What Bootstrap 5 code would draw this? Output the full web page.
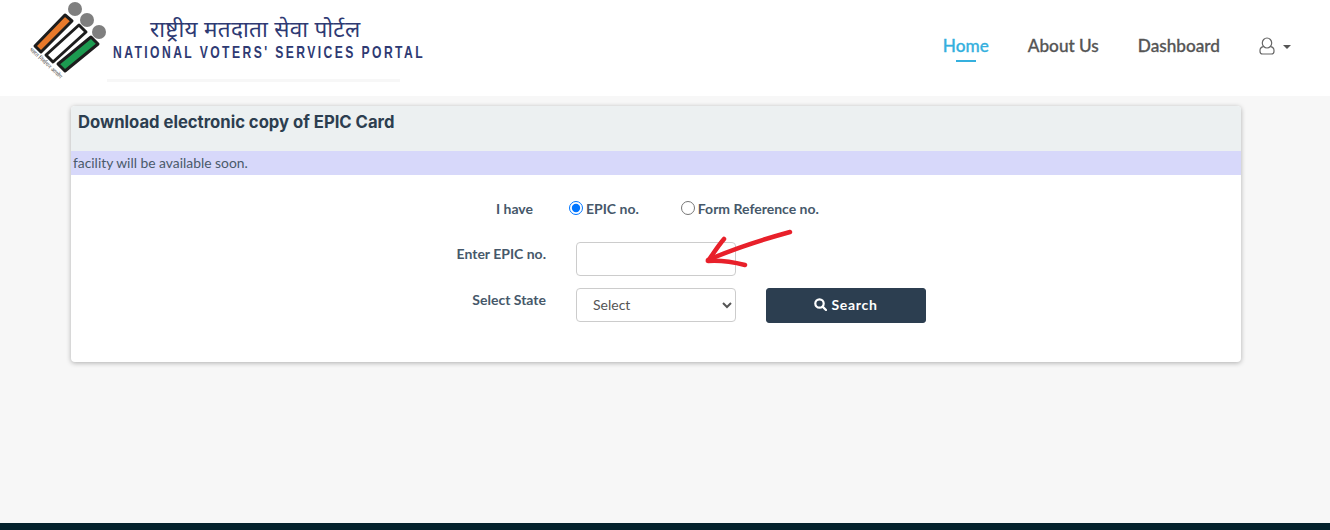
<!DOCTYPE html>
<html lang="en">
<head>
  <meta charset="UTF-8" />
  <meta name="viewport" content="width=device-width, initial-scale=1.0"/>
  <link href="https://cdn.jsdelivr.net/npm/bootstrap@5.3.5/dist/css/bootstrap.min.css" rel="stylesheet" />
  <script src="https://cdn.jsdelivr.net/npm/bootstrap@5.3.5/dist/js/bootstrap.bundle.min.js" defer></script>
  <title>National Voters' Services Portal</title>
  <style>
    body {
      background: #f7f7f7;
      font-family: Lato, "Open Sans", sans-serif;
      color: #34495e;
    }

    .top-head {
      height: 96px;
      background: #fff;
      padding: 0 39px 0 28px;
    }

    .logo-mark { width: 82px; height: 84px; }

    .logo-words { margin-left: 3px; padding-top: 15px; }

    .hindi-name {
      font-family: "Noto Sans", "DejaVu Sans", sans-serif;
      font-size: 22.5px;
      line-height: 28px;
      letter-spacing: .3px;
      color: #2e3a73;
      padding-left: 37px;
    }

    .english-name {
      font-family: "Liberation Sans", sans-serif;
      font-weight: 700;
      font-size: 16.5px;
      line-height: 18px;
      letter-spacing: 3.3px;
      color: #2e3a73;
      white-space: nowrap;
      transform: scaleX(.735);
      transform-origin: left center;
    }

    .logo-fade {
      width: 293px;
      height: 3px;
      margin: 18px 0 0 -6px;
      background: #f7f7f7;
    }

    .top-nav { gap: 39px; margin-bottom: 4px; }

    .top-nav .nav-link {
      padding: 0;
      font-size: 17.2px;
      font-weight: 500;
      -webkit-text-stroke: .3px currentColor;
      color: #555;
      position: relative;
    }

    .top-nav .nav-link.active { color: #35b0de; }

    .top-nav .nav-link.active::after {
      content: "";
      position: absolute;
      left: 13px;
      right: 13px;
      bottom: -3px;
      height: 2px;
      background: #35b0de;
    }

    .user-menu { display: flex; align-items: center; gap: 8px; }

    .user-menu i {
      margin-top: 2px;
      border-top: 4px solid #555;
      border-left: 4px solid transparent;
      border-right: 4px solid transparent;
    }

    .main-wrap { padding: 10px 89px 0 71px; }

    .epic-box {
      height: 256px;
      background: #fff;
      border-radius: 4px;
      box-shadow: 0 1px 5px rgba(0, 0, 0, .3);
      overflow: hidden;
    }

    .epic-title {
      height: 45px;
      background: #ecf0f1;
      padding: 6px 7px 0;
      font-family: Inter, sans-serif;
      font-weight: 700;
      font-size: 16.65px;
      line-height: 20px;
      color: #2c3e50;
    }

    .epic-note {
      height: 24px;
      background: #d7d8fa;
      padding-left: 2px;
      font-size: 13.85px;
      line-height: 24px;
      color: #4a5a6a;
    }

    .epic-form {
      display: grid;
      grid-template-columns: 475px 160px 160px;
      column-gap: 30px;
      padding-top: 24px;
      position: relative;
      font-size: 14px;
    }

    .field-name {
      text-align: right;
      font-weight: 700;
      line-height: 20px;
      color: #46586a;
      padding-top: 2px;
    }

    .choice-row {
      grid-column: 2 / 4;
      margin-left: -7px;
      height: 43px;
      display: flex;
      font-weight: 700;
      line-height: 20px;
      color: #46586a;
    }

    .choice-row label { display: flex; align-items: flex-start; gap: 3px; }

    .choice-row label + label { margin-left: 42px; }

    .choice-row input { width: 14px; height: 14px; margin: 2px 0 0; }

    .have-label { padding: 0 13px 0 0; height: 43px; }

    .epic-form .form-control,
    .epic-form .form-select {
      height: 34px;
      font-size: 14px;
      color: #555;
      border-color: #ccc;
      border-radius: 4px;
      padding-left: 16px;
    }

    .epic-form .form-select {
      appearance: auto;
      background-image: none;
      padding: 0 0 2px 12px;
    }

    .second-row { margin-top: 12px; }

    .epic-btn {
      height: 35px;
      background: #2c3e50;
      border-color: #2c3e50;
      color: #fff;
      font-size: 14px;
      font-weight: 700;
      letter-spacing: .7px;
      border-radius: 3px;
      padding: 0 0 2px;
    }

    .red-arrow {
      position: absolute;
      left: 630px;
      top: 50px;
      width: 100px;
      height: 50px;
      pointer-events: none;
    }

    .page-foot { height: 7px; background: #04222c; }
  </style>
</head>
<body class="d-flex flex-column min-vh-100">

  <header class="top-head d-flex align-items-center justify-content-between">
    <div class="d-flex align-items-start align-self-start">
      <svg class="logo-mark" viewBox="28 0 82 84" aria-hidden="true">
        <circle cx="75" cy="9" r="7" fill="#7f7f7f"/>
        <circle cx="87" cy="20" r="7" fill="#7f7f7f"/>
        <circle cx="99" cy="32" r="7" fill="#7f7f7f"/>
        <polygon points="65,15 72,21 41,52 35,46" fill="#e8792a" stroke="#1d1d1d" stroke-width="3" stroke-linejoin="round"/>
        <polygon points="79,25 86,32 53,62 46,55" fill="#fff" stroke="#1d1d1d" stroke-width="3" stroke-linejoin="round"/>
        <polygon points="91,37 98,44 65,71 58,64" fill="#1c9a50" stroke="#1d1d1d" stroke-width="3" stroke-linejoin="round"/>
        <text x="29" y="50" transform="rotate(43 29 50)" font-size="5.500" fill="#555" font-family="Noto Sans, DejaVu Sans, sans-serif">भारत निर्वाचन आयोग</text>
      </svg>
      <div class="logo-words">
        <div class="hindi-name">राष्ट्रीय मतदाता सेवा पोर्टल</div>
        <div class="english-name">NATIONAL VOTERS' SERVICES PORTAL</div>
        <div class="logo-fade"></div>
      </div>
    </div>
    <nav class="nav top-nav align-items-center">
      <a class="nav-link active" href="#">Home</a>
      <a class="nav-link" href="#">About Us</a>
      <a class="nav-link" href="#">Dashboard</a>
      <a class="nav-link user-menu" href="#" aria-label="Account">
        <svg width="16" height="18" viewBox="0 0 16 18" fill="none" stroke="#666" stroke-width="1.200" aria-hidden="true">
          <ellipse cx="8" cy="6" rx="4.700" ry="5"/>
          <path d="M4.300 9.700C2.200 10.200 1 11.600 1 13.500v.7C1 16 2 17 3.600 17h8.800c1.600 0 2.600-1 2.600-2.800v-.7c0-1.900-1.200-3.300-3.300-3.800"/>
        </svg>
        <i></i>
      </a>
    </nav>
  </header>

  <main class="main-wrap">
    <section class="epic-box">
      <div class="epic-title">Download electronic copy of EPIC Card</div>
      <div class="epic-note">facility will be available soon.</div>
      <form class="epic-form">
        <div class="field-name have-label">I have</div>
        <div class="choice-row">
          <label><input type="radio" name="idType" checked>EPIC no.</label>
          <label><input type="radio" name="idType">Form Reference no.</label>
        </div>

        <label class="field-name" for="epicNo">Enter EPIC no.</label>
        <input class="form-control" id="epicNo" type="text">
        <div></div>

        <label class="field-name second-row" for="stateSel">Select State</label>
        <select class="form-select second-row" id="stateSel">
          <option>Select</option>
        </select>
        <button type="button" class="btn epic-btn second-row d-flex align-items-center justify-content-center gap-1">
          <svg width="13" height="13" viewBox="0 0 13 13" fill="none" stroke="#fff" stroke-width="2.200" aria-hidden="true">
            <circle cx="5.500" cy="5.500" r="4.200"/>
            <path d="M8.600 8.600L12 12" stroke-linecap="round"/>
          </svg>
          Search
        </button>

        <svg class="red-arrow" viewBox="0 0 100 50" fill="none" stroke="#e8202a" stroke-width="4.500" stroke-linecap="round" stroke-linejoin="round" aria-hidden="true">
          <path d="M89 7C60 15 30 25 7 35"/>
          <path d="M23 14C17 21 12 29 7 36C20 35 32 37 44 40"/>
        </svg>
      </form>
    </section>
  </main>

  <footer class="page-foot mt-auto"></footer>

</body>
</html>
